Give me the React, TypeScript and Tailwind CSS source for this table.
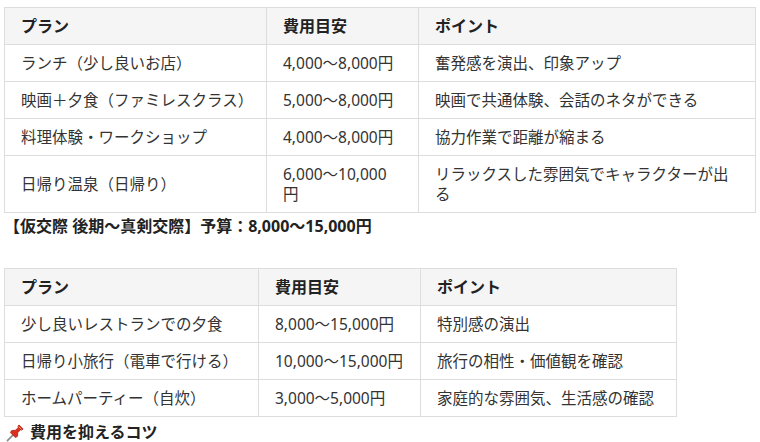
const font = { fontFamily: '"Noto Sans", "Noto Sans CJK JP", sans-serif' };

const plans1 = [
  ["ランチ（少し良いお店）", "4,000〜8,000円", "奮発感を演出、印象アップ"],
  ["映画＋夕食（ファミレスクラス）", "5,000〜8,000円", "映画で共通体験、会話のネタができる"],
  ["料理体験・ワークショップ", "4,000〜8,000円", "協力作業で距離が縮まる"],
  ["日帰り温泉（日帰り）", "6,000〜10,000円", "リラックスした雰囲気でキャラクターが出る"],
];

const plans2 = [
  ["少し良いレストランでの夕食", "8,000〜15,000円", "特別感の演出"],
  ["日帰り小旅行（電車で行ける）", "10,000〜15,000円", "旅行の相性・価値観を確認"],
  ["ホームパーティー（自炊）", "3,000〜5,000円", "家庭的な雰囲気、生活感の確認"],
];

const cell = "border border-[#dddddd] pl-[16px] py-2 align-middle text-left leading-5";

function PlanTable({ rows, widths, pads }: { rows: string[][]; widths: number[]; pads: string[] }) {
  return (
    <table
      className="table-fixed border-collapse text-[15.5px] text-[#333333]"
      style={{ width: widths.reduce((a, b) => a + b, 0) }}
    >
      <colgroup>
        {widths.map((w, i) => (
          <col key={i} style={{ width: w }} />
        ))}
      </colgroup>
      <thead>
        <tr className="bg-[#f5f5f5]">
          {["プラン", "費用目安", "ポイント"].map((h, i) => (
            <th key={h} className={`${cell} ${pads[i]} text-[16px] font-bold text-[#222222]`}>
              {h}
            </th>
          ))}
        </tr>
      </thead>
      <tbody>
        {rows.map((r) => (
          <tr key={r[0]} className="bg-white">
            {r.map((c, i) => (
              <td key={c} className={`${cell} ${pads[i]}`}>
                {c}
              </td>
            ))}
          </tr>
        ))}
      </tbody>
    </table>
  );
}

function Pin() {
  return (
    <svg width="19" height="19" viewBox="0 0 16 16" className="shrink-0">
      <path d="M1.2 14.8 L6.5 9.5" stroke="#8a8a8a" strokeWidth="1.4" strokeLinecap="round" />
      <path d="M3.7 8.1 L7.9 12.3 L9.7 11.2 L9.9 7.9 L12.4 5.6 L13.4 6 L14.4 5 L11 1.6 L10 2.6 L10.4 3.6 L8.1 6.1 L4.8 6.3 Z" fill="#dc2f1c" stroke="#a31c0f" strokeWidth="0.6" strokeLinejoin="round" />
      <path d="M10.6 3 L13 5.4" stroke="#f58b7c" strokeWidth="0.8" />
    </svg>
  );
}

export default function App() {
  return (
    <div className="h-[442px] w-[760px] overflow-hidden bg-white pl-[4px] pt-[7px]" style={font}>
      <PlanTable
        rows={plans1}
        widths={[262, 152, 337]}
        pads={["pr-[14px] whitespace-nowrap", "pr-[24px]", "pr-[14px]"]}
      />
      <p className="mt-[1px] text-[16px] font-bold leading-6 text-[#222222]">
        【仮交際 後期〜真剣交際】予算：8,000〜15,000円
      </p>
      <div className="mt-[30px]">
        <PlanTable
          rows={plans2}
          widths={[254, 162, 256]}
          pads={["pr-[14px] whitespace-nowrap", "pr-[10px] whitespace-nowrap", "pr-[14px]"]}
        />
      </div>
      <p className="mt-[5px] flex items-center gap-[5px] pl-[2px] text-[16px] font-bold leading-5 text-[#222222]">
        <Pin />
        費用を抑えるコツ
      </p>
    </div>
  );
}
